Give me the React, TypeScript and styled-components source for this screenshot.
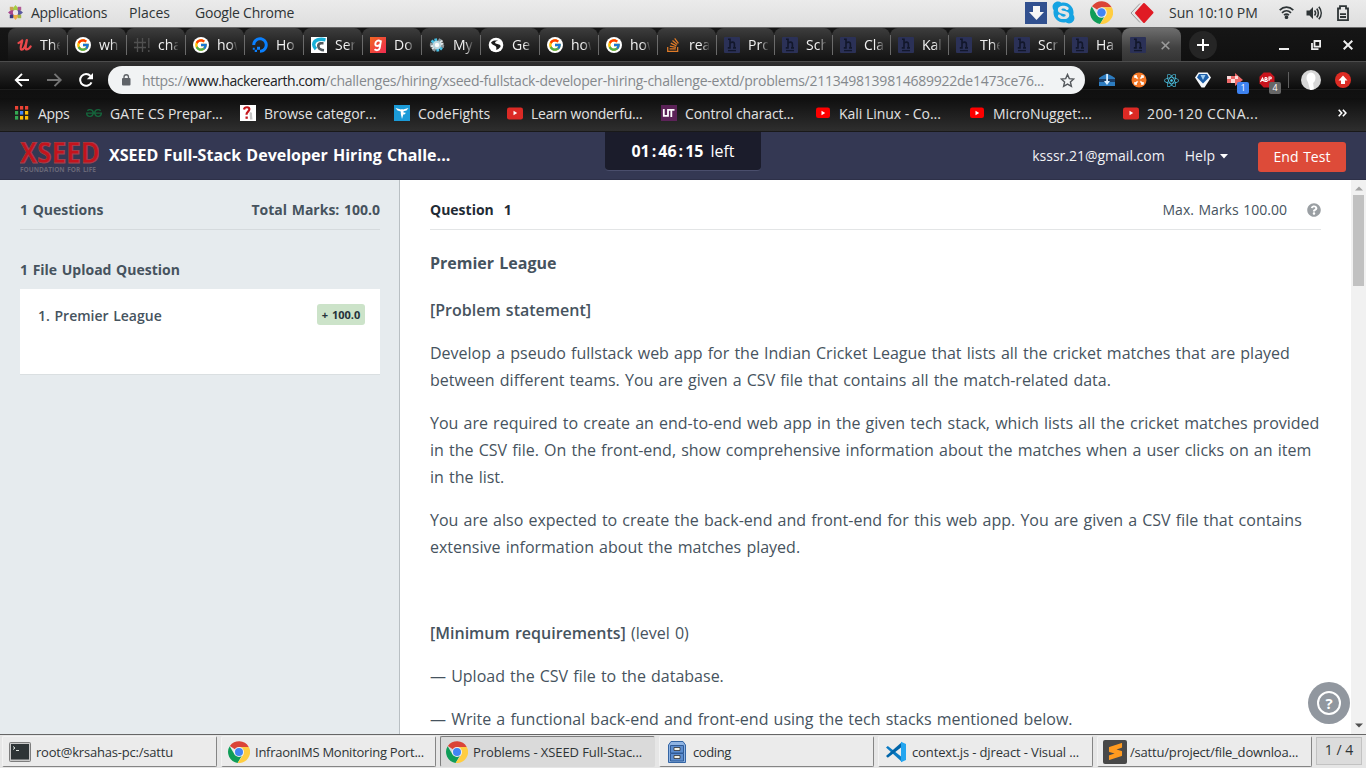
import React from 'react';
import styled, { createGlobalStyle, css } from 'styled-components';
import { FcGoogle } from 'react-icons/fc';
import { FaDigitalOcean, FaStackOverflow, FaReact, FaSkype, FaQuestionCircle } from 'react-icons/fa';
import { SiGeeksforgeeks, SiSublimetext } from 'react-icons/si';

const GlobalStyle = createGlobalStyle`
  *, *::before, *::after { box-sizing: border-box; }
  body { margin: 0; overflow: hidden; background: #fff; }
  p { margin: 0; }
  svg { display: block; flex: none; }
`;

const Screen = styled.div`
  width: 1366px;
  height: 768px;
  display: flex;
  flex-direction: column;
  overflow: hidden;
  font-family: 'Open Sans', 'Noto Sans', sans-serif;
`;

const Label = styled.span<{ $ls?: number }>`
  white-space: nowrap;
  letter-spacing: ${(p) => p.$ls ?? 0}px;
`;

/* ---------- desktop panel ---------- */

const DesktopBar = styled.header`
  height: 28px;
  flex: none;
  display: flex;
  align-items: center;
  padding: 0 17px 2px 8px;
  background: linear-gradient(#ebebeb, #dedede);
  border-bottom: 1px solid #6b6b6b;
  color: #2e3436;
  font-size: 14px;
`;

const DesktopMenu = styled.nav`
  display: flex;
  align-items: center;
  margin-left: 8px;
  flex: 1;
`;

const MenuName = styled(Label)<{ $w: number }>`
  width: ${(p) => p.$w}px;
`;

const Tray = styled.div`
  display: flex;
  align-items: center;
  height: 25px;
`;

const TrayIcon = styled.span<{ $gap: number }>`
  display: flex;
  margin-right: ${(p) => p.$gap}px;
`;

const SkypeBadge = styled.span`
  display: flex;
  margin-right: 14px;
  color: #15a3e2;
`;

/* ---------- browser tabs ---------- */

const TabStrip = styled.div`
  height: 33px;
  flex: none;
  display: flex;
  padding-left: 8px;
  background: linear-gradient(#161616, #101010);
`;

const Tab = styled.div<{ $w: number; $first?: boolean }>`
  width: ${(p) => p.$w}px;
  height: 33px;
  flex: none;
  display: flex;
  align-items: center;
  gap: 8px;
  padding: 1px 0 0 ${(p) => (p.$first ? 9 : 8)}px;
  border-radius: 8px 8px 0 0;
  background: linear-gradient(#3d3d3d, #262626 45%, #121212);
  color: #f1f1f1;
  font-size: 14px;
`;

const TabDivider = styled.i`
  width: 1px;
  height: 20px;
  margin: 7px -1px 0 0;
  flex: none;
  z-index: 1;
  background: #6a6a6a;
`;

const TabTitle = styled.span`
  width: 20px;
  margin-top: -1px;
  overflow: hidden;
  white-space: nowrap;
  -webkit-mask-image: linear-gradient(90deg, #000 60%, rgba(0, 0, 0, 0.1));
  mask-image: linear-gradient(90deg, #000 60%, rgba(0, 0, 0, 0.1));
`;

const ActiveTab = styled.div`
  width: 59px;
  height: 33px;
  flex: none;
  display: flex;
  align-items: center;
  gap: 15px;
  padding: 1px 0 0 8px;
  border-radius: 8px 8px 0 0;
  background: linear-gradient(#6e6e6e, #414141 60%, #343434);
`;

const NewTab = styled.button`
  width: 28px;
  height: 28px;
  margin: 3px 0 0 8px;
  padding: 0;
  border: 0;
  border-radius: 50%;
  display: grid;
  place-items: center;
  background: #252525;
`;

const WindowButtons = styled.div`
  margin-left: auto;
  padding: 1px 13px 0 0;
  display: flex;
  align-items: center;
  gap: 22px;
`;

const HackerEarthTile = styled.span`
  width: 16px;
  height: 16px;
  flex: none;
  display: grid;
  place-items: center;
  border-radius: 1px;
  background: #2b3157;
`;

/* ---------- toolbar ---------- */

const Toolbar = styled.div`
  height: 37px;
  flex: none;
  display: flex;
  align-items: center;
  padding: 0 14px;
  border-top: 1px solid #4c4c4c;
  background: linear-gradient(#303030, #0c0c0c 27px, #2b2b2b 27px, #101010 28px, #111);
`;

const NavIcon = styled.span<{ $gap: number }>`
  display: flex;
  margin-right: ${(p) => p.$gap}px;
`;

const Omnibox = styled.div`
  width: 977px;
  height: 28px;
  flex: none;
  display: flex;
  align-items: center;
  padding: 0 10px 0 12px;
  border-radius: 14px;
  background: #f1f3f4;
  font-size: 14px;
  color: #84888c;
`;

const Url = styled.div`
  flex: 1;
  display: flex;
  margin-left: 10px;
`;

const Host = styled(Label)`
  color: #202124;
`;

const Extensions = styled.div`
  display: flex;
  align-items: center;
  gap: 16px;
  margin-left: 14px;
`;

const Extension = styled.span`
  position: relative;
  width: 16px;
  height: 16px;
  display: grid;
  place-items: center;
`;

const ExtensionCount = styled.b<{ $color: string }>`
  position: absolute;
  left: 10px;
  top: 10px;
  width: 12px;
  height: 12px;
  border-radius: 2px;
  background: ${(p) => p.$color};
  color: #fff;
  font-size: 9px;
  font-weight: 400;
  line-height: 12px;
  text-align: center;
`;

const ToolbarDivider = styled.i`
  width: 1px;
  height: 16px;
  margin: 0 12px 0 13px;
  background: #5f5f5f;
`;

const Round = styled.span<{ $size: number; $bg: string }>`
  width: ${(p) => p.$size}px;
  height: ${(p) => p.$size}px;
  border-radius: 50%;
  display: grid;
  place-items: center;
  overflow: hidden;
  background: ${(p) => p.$bg};
`;

const BookmarksBar = styled.div`
  height: 34px;
  flex: none;
  display: flex;
  align-items: center;
  padding: 0 19px 3px 14px;
  background: linear-gradient(#0f0f0f, #2e2e2e);
  border-bottom: 1px solid #191919;
  color: #e2e2e2;
  font-size: 14px;
`;

const Bookmark = styled.a<{ $w: number }>`
  width: ${(p) => p.$w}px;
  flex: none;
  display: flex;
  align-items: center;
  gap: 8px;
`;

const Overflow = styled.span`
  margin-left: auto;
`;

/* ---------- test page ---------- */

const PageHeader = styled.header`
  height: 48px;
  flex: none;
  display: flex;
  align-items: flex-start;
  padding: 0 20px;
  background: #343853;
  box-shadow: inset 0 -1px #2d3048;
  word-spacing: 1px;
  color: #fff;
`;

const Logo = styled.div`
  width: 79px;
  margin-top: 10px;
  display: flex;
`;

const TestTitle = styled.h1`
  margin: 0 0 0 10px;
  width: 496px;
  font-size: 16px;
  font-weight: 700;
  line-height: 47px;
  white-space: nowrap;
`;

const Timer = styled.div`
  width: 156px;
  height: 39px;
  border-bottom: 1px solid #4a4e6c;
  border-radius: 0 0 4px 4px;
  background: #1b1c2b;
  font-size: 16px;
  line-height: 38px;
  text-align: center;
  white-space: nowrap;
`;

const Colon = styled.b`
  margin: 0 2px;
`;

const LeftWord = styled.span`
  margin-left: 7px;
`;

const Account = styled.div`
  margin-left: auto;
  display: flex;
  font-size: 14px;
  line-height: 48px;
  color: #f2f2f5;
`;

const HelpMenu = styled.span`
  display: flex;
  align-items: center;
  height: 48px;
  gap: 5px;
  margin: 0 30px 0 20px;
`;

const EndTest = styled.button`
  width: 88px;
  height: 30px;
  margin-top: 10px;
  padding: 0;
  border: 0;
  border-radius: 3px;
  background: #dd4b39;
  color: #fff;
  font: 14px/28px 'Open Sans', sans-serif;
  word-spacing: 1px;
`;

const PageBody = styled.main`
  flex: 1;
  min-height: 0;
  display: flex;
  word-spacing: 1px;
  color: #46535e;
`;

const Sidebar = styled.aside`
  width: 400px;
  flex: none;
  padding: 10px 19px 0 20px;
  border-right: 1px solid #b9bfc3;
  background: #e6ebee;
  font-size: 14px;
  font-weight: 700;
`;

const headRow = css`
  display: flex;
  justify-content: space-between;
  height: 40px;
  line-height: 39px;
  font-size: 14px;
`;

const SidebarHead = styled.div`
  ${headRow}
  border-bottom: 1px solid #d5dadd;
`;

const SectionTitle = styled.h2`
  margin: 30px 0 0;
  height: 29px;
  font-size: 14px;
  line-height: 20px;
`;

const QuestionCard = styled.div`
  height: 86px;
  display: flex;
  justify-content: space-between;
  padding: 15px 15px 0 18px;
  background: #fff;
  border-bottom: 1px solid #dadfe1;
  font-weight: 600;
  line-height: 24px;
`;

const Score = styled.span`
  width: 48px;
  height: 21px;
  border-radius: 3px;
  background: #cce3c9;
  color: #25323b;
  font-size: 11px;
  font-weight: 700;
  line-height: 21px;
  text-align: center;
`;

const Content = styled.section`
  width: 951px;
  height: 554px;
  overflow: hidden;
  padding: 10px 30px 0;
  background: #fff;
`;

const QuestionHead = styled.div`
  ${headRow}
  border-bottom: 1px solid #e3e5e6;
`;

const QuestionNumber = styled.b`
  color: #1f2b35;
`;

const Gap = styled.span`
  margin-left: 10px;
`;

const MaxMarks = styled.span`
  display: flex;
  align-items: center;
  gap: 20px;
`;

const HelpIcon = styled(FaQuestionCircle)`
  color: #9a9fa3;
`;

const ProblemTitle = styled.h2`
  margin: 20px 0;
  font-size: 16px;
  font-weight: 700;
  line-height: 27px;
`;

const Para = styled.p`
  min-height: 27px;
  margin-bottom: 16px;
  font-size: 16px;
  line-height: 27px;
  white-space: nowrap;
`;

const Strong = styled.span`
  font-weight: 600;
`;

const ScrollTrack = styled.div`
  width: 15px;
  display: flex;
  flex-direction: column;
  align-items: center;
  padding: 6px 0 6px;
  background: #f1f1f1;
`;

const ScrollThumb = styled.div`
  width: 11px;
  height: 91px;
  margin: 4px 0 auto;
  background: #c1c1c1;
`;

const HelpBubble = styled.button`
  position: absolute;
  left: 1308px;
  top: 682px;
  width: 42px;
  height: 42px;
  padding: 0;
  border: 0;
  border-radius: 50%;
  display: grid;
  place-items: center;
  background: #91979f;
`;

const BubbleRing = styled.span`
  width: 24px;
  height: 24px;
  border: 2px solid #fff;
  border-radius: 50%;
  color: #fff;
  font: 700 15px/20px 'Open Sans', sans-serif;
  text-align: center;
`;

/* ---------- window list ---------- */

const WindowList = styled.footer`
  height: 34px;
  flex: none;
  display: flex;
  align-items: flex-start;
  gap: 4px;
  padding: 1px 4px 0 2px;
  border-top: 1px solid #666;
  background: #e6e6e6;
  color: #2e3436;
  font-size: 13px;
`;

const WindowButton = styled.div<{ $active?: boolean }>`
  width: 215px;
  height: 31px;
  flex: none;
  display: flex;
  align-items: center;
  gap: 5px;
  padding: 0 0 0 ${(p) => (p.$active ? 5 : 6)}px;
  border-radius: 2px;
  ${(p) =>
    p.$active
      ? css`
          background: #dadada;
          border: 1px solid;
          border-color: #7d7d7d #dadada #dadada #7d7d7d;
        `
      : css`
          background: #ebebeb;
          border: 1px solid;
          border-color: #f3f3f3 #858585 #858585 #f3f3f3;
        `}
`;

const Workspace = styled.div`
  width: 47px;
  height: 28px;
  margin-top: 1px;
  border: 1px solid #c2c2c2;
  background: #dcdcdc;
  font-size: 14px;
  line-height: 24px;
  text-align: center;
`;

/* ---------- drawings ---------- */

const HackerEarthIcon = () => (
  <HackerEarthTile>
    <svg width="16" height="16" viewBox="0 0 16 16" fill="none" stroke="#12172b" strokeWidth="1.6">
      <path d="M4 2.3h2v8.400M3.800 10.900h3M6 6.300c1-1.600 4.400-1.800 4.400.9v3.500M9 10.900h3" />
      <path d="M4 13.600h8" strokeWidth="1.3" />
    </svg>
  </HackerEarthTile>
);

const GoogleIcon = () => (
  <Round $size={16} $bg="#fff">
    <FcGoogle size={14} />
  </Round>
);

const UdemyIcon = () => (
  <svg width="15" height="14" viewBox="0 0 15 14" fill="none" stroke="#e9484b" strokeWidth="2.3" strokeLinecap="round" strokeLinejoin="round">
    <path d="M1.500 5C3 4.500 4.500 3.300 5.200 2.400 5 5.500 2.200 11 4.500 11.700c2.300.2 4.200-4.500 5.300-9.500C9.300 5.500 7.500 11.200 9.700 11.400c1.600 0 3-1.400 3.900-2.900" />
  </svg>
);

const HashBangIcon = () => (
  <svg width="16" height="16" viewBox="0 0 16 16" fill="none" stroke="#505050" strokeWidth="1.300">
    <path d="M3.500 1v14M8.500 1v14M0 5.500h12M0 10.500h12M14.800 1v10M14.800 13v2" />
  </svg>
);

const SwirlIcon = () => (
  <svg width="16" height="16" viewBox="0 0 16 16">
    <path fill="#fff" d="M0 0h16v16H0z" />
    <path d="M14.500 2.800C8.500 1.300 3 3 2.700 7.500c0 2.500 1.300 3.500 2.300 4.500" fill="none" stroke="#18b0d8" strokeWidth="3.400" />
    <path d="M12.500 6.300H9.500c-3.500 1.200-3 6.500 3.500 6.900" fill="none" stroke="#515a5f" strokeWidth="2.600" />
  </svg>
);

const GoibiboIcon = () => (
  <svg width="16" height="16" viewBox="0 0 16 16">
    <defs>
      <linearGradient id="warm" x2="1" y2="1"><stop stopColor="#f26722" /><stop offset="1" stopColor="#ee2a50" /></linearGradient>
    </defs>
    <path fill="url(#warm)" d="M0 0h16v16H0z" />
    <path d="M10.500 4.300C8 2.500 5.300 4.500 5.300 7c0 2.600 3.200 2.400 4.500.4M11 3.300 9.700 11c-.5 2.600-3.500 2.700-5.200 1.300" fill="none" stroke="#fff" strokeWidth="1.900" />
  </svg>
);

const BurstIcon = () => (
  <svg width="16" height="16" viewBox="0 0 16 16">
    <g stroke="#8d979b" strokeWidth="3"><path d="M11.500 2 4.500 14M1 7l14 2.500" /></g>
    <g stroke="#49bfe4" strokeWidth="2.800"><path d="M6.500 1.500 9 14.500M2.500 3.500 13 12.500" /></g>
    <g stroke="#dfe5e7" strokeWidth="1.800"><path d="M13.500 3.500 3 12M1.500 9.500l13-3" /></g>
    <circle cx="8" cy="8" r="4.200" fill="#bcd6de" />
    <circle cx="8" cy="8" r="2.200" fill="#fafafa" />
  </svg>
);

const GlobeIcon = () => (
  <svg width="16" height="16" viewBox="0 0 16 16">
    <circle cx="8" cy="8" r="7.300" fill="#fff" />
    <path d="M3 5.500c2-2.500 5-2 7-2-3 1-4 2.300-1.500 3.300 2.500.5 4.500 1 4 3.200-1.500 1-2.500 3.300-4.500 2.500.8-1.500.5-3-1.500-4C5 8 4 7.500 3 5.500z" fill="#1c1c1c" />
  </svg>
);

const tabs = [
  { title: 'The', icon: <UdemyIcon /> },
  { title: 'wh', icon: <GoogleIcon /> },
  { title: 'cha', icon: <HashBangIcon /> },
  { title: 'how', icon: <GoogleIcon /> },
  { title: 'Ho', icon: <FaDigitalOcean size={16} color="#0a80ff" /> },
  { title: 'Ser', icon: <SwirlIcon /> },
  { title: 'Do', icon: <GoibiboIcon /> },
  { title: 'My', icon: <BurstIcon /> },
  { title: 'Ge', icon: <GlobeIcon /> },
  { title: 'how', icon: <GoogleIcon /> },
  { title: 'how', icon: <GoogleIcon /> },
  { title: 'rea', icon: <FaStackOverflow size={16} color="#e07b28" /> },
  ...['Pro', 'Sch', 'Cla', 'Kal', 'The', 'Scr', 'Ha'].map((title) => ({ title, icon: <HackerEarthIcon /> })),
];

const AppsIcon = () => {
  const colors = ['#ea4335', '#ea4335', '#ea4335', '#34a853', '#4285f4', '#fbbc05', '#34a853', '#fbbc05', '#fbbc05'];
  return (
    <svg width="16" height="16" viewBox="0 0 16 16">
      {colors.map((c, i) => (
        <rect key={i} x={1 + (i % 3) * 5} y={1 + Math.floor(i / 3) * 5} width="3.200" height="3.600" fill={c} />
      ))}
    </svg>
  );
};

const QuestionFigureIcon = () => (
  <svg width="16" height="16" viewBox="0 0 16 16">
    <path fill="#fff" d="M0 0h16v16H0z" />
    <path d="M4 4.500C4.500 1.500 10 1.500 9.300 4.700c-.3 2-3 2-2.800 5" fill="none" stroke="#c4161c" strokeWidth="2.200" />
    <path d="M5.500 11.500h2.300v2.300H5.500z" fill="#c4161c" />
    <path d="M9.500 7.500c2-1 3 .5 2.500 2.500l.5 4.500H10z" fill="#c6c6c6" />
  </svg>
);

const CodeFightsIcon = () => (
  <svg width="16" height="16" viewBox="0 0 16 16">
    <path fill="#1b9bd8" d="M0 0h16v16H0z" />
    <path fill="#fff" d="M1.500 3 7 4.500 8 4l1 .5L14.500 3 12.500 5.500 9.500 6.200v1.300l2.200.2-.7 1.500-1.700.3L8 14 6.800 9V6.500L3.500 5.500z" />
  </svg>
);

const PlayIcon = ({ soft }: { soft?: boolean }) => (
  <svg width="16" height="16" viewBox="0 0 16 16">
    <rect x={soft ? 0 : 1} y="2.500" width={soft ? 16 : 14} height={soft ? 12 : 10.500} rx="2.200" fill={soft ? '#dc2a25' : '#fe0000'} />
    <path d="M6.500 5.800 10.200 8l-3.700 2.200z" fill="#fff" />
  </svg>
);

const UtIcon = () => (
  <svg width="16" height="16" viewBox="0 0 16 16">
    <path fill="#5c2358" d="M0 0h16v16H0z" />
    <path d="M2.800 4v6.800H7V4M7 4.900h6.500M10.300 5v7" fill="none" stroke="#fff" strokeWidth="1.800" />
  </svg>
);

const bookmarks = [
  { text: 'Apps', w: 72, ls: -0.3, icon: <AppsIcon /> },
  { text: 'GATE CS Prepar...', w: 154, ls: -0.05, icon: <SiGeeksforgeeks size={16} color="#15653c" /> },
  { text: 'Browse categor...', w: 154, ls: 0, icon: <QuestionFigureIcon /> },
  { text: 'CodeFights', w: 113, ls: 0, icon: <CodeFightsIcon /> },
  { text: 'Learn wonderfu...', w: 154, ls: -0.22, icon: <PlayIcon soft /> },
  { text: 'Control charact...', w: 154, ls: -0.14, icon: <UtIcon /> },
  { text: 'Kali Linux - Co...', w: 154, ls: -0.03, icon: <PlayIcon /> },
  { text: 'MicroNugget:...', w: 154, ls: 0, icon: <PlayIcon /> },
  { text: '200-120 CCNA...', w: 154, ls: 0.48, icon: <PlayIcon soft /> },
];

const ChromeIcon = ({ size }: { size: number }) => (
  <svg width={size} height={size} viewBox="0 0 24 24">
    <path fill="#db4437" d="M12 12 2.040 5.500A12 12 0 0 1 22.600 6.500H12z" />
    <path fill="#0f9d58" d="M12 12 7.200 14.750 1.800 5.700A12 12 0 0 0 10.500 23.900l5.200-8.800z" />
    <path fill="#ffcd40" d="M12 6.500h10.700A12 12 0 0 1 10.500 23.900l6.300-9.200z" />
    <circle cx="12" cy="12" r="5.500" fill="#f1f1f1" />
    <circle cx="12" cy="12" r="4.400" fill="#4285f4" />
  </svg>
);

const TerminalIcon = () => (
  <svg width="22" height="20" viewBox="0 0 22 20">
    <rect x=".5" y=".5" width="21" height="19" rx="1" fill="#c9c9c9" stroke="#7d7d7d" />
    <rect x="2" y="2" width="18" height="15.500" fill="#2e3436" />
    <path d="M4 4.500 6 6 4 7.500M7 8.500h3" fill="none" stroke="#dfe5e0" />
  </svg>
);

const CabinetIcon = () => (
  <svg width="22" height="22" viewBox="0 0 22 22">
    <path d="M5 .5h12l2.500 3.500v17.500h-17V4z" fill="#8fb4e3" stroke="#3465a4" />
    <path d="M4.500 4.500h13v7.500h-13zM4.500 12.500h13V20h-13z" fill="#5c8dcf" stroke="#2f5a96" />
    <path d="M8 6.500h6v3H8zM8 14.500h6v3H8z" fill="#f2f2e8" stroke="#333" strokeWidth=".8" />
  </svg>
);

const CodeIcon = () => (
  <svg width="22" height="22" viewBox="0 0 22 22">
    <path d="M1 6.500 2.800 5 17 16.200V21z" fill="#0a7bc4" />
    <path d="M1 15 2.800 16.700 17 5.800V1z" fill="#0065a9" />
    <path d="M16 .8 21 3v16l-5 2.300z" fill="#23a5f0" />
  </svg>
);

const SublimeTile = styled.span`
  width: 24px;
  height: 24px;
  margin-right: -2px;
  margin-left: -1px;
  display: grid;
  place-items: center;
  border-radius: 2px;
  background: #484848;
  color: #ff9a1f;
`;

const windows = [
  { text: 'root@krsahas-pc:/sattu', ls: -0.2, icon: <TerminalIcon /> },
  { text: 'InfraonIMS Monitoring Port...', ls: -0.25, icon: <ChromeIcon size={22} /> },
  { text: 'Problems - XSEED Full-Stac...', ls: -0.08, icon: <ChromeIcon size={22} />, active: true },
  { text: 'coding', ls: -0.39, icon: <CabinetIcon /> },
  { text: 'context.js - djreact - Visual ...', ls: -0.13, icon: <CodeIcon /> },
  { text: '/sattu/project/file_downloa...', ls: -0.19, icon: <SublimeTile><SiSublimetext size={17} /></SublimeTile> },
];

const DistroIcon = () => (
  <svg width="15" height="15" viewBox="0 0 15 15">
    <path d="M5 3 7.500 0 10 3v2.500H5z" fill="#a5cf45" />
    <path d="M12 5 15 7.500 12 10H9.500V5z" fill="#5a59a0" />
    <path d="M10 12 7.500 15 5 12V9.500h5z" fill="#efb04a" />
    <path d="M3 10 0 7.500 3 5h2.500v5z" fill="#a8488f" />
    <path d="M1.800 1.800h3.500v3.500H1.800z" fill="#c9a34f" />
    <path d="M9.700 1.800h3.500v3.500H9.700z" fill="#b05a94" />
    <path d="M1.800 9.700h3.500v3.500H1.800z" fill="#3b3a80" />
    <path d="M9.700 9.700h3.500v3.500H9.700z" fill="#a3b84a" />
    <circle cx="7.500" cy="7.500" r="2.600" fill="#ece9ec" />
  </svg>
);

const DownloadIcon = () => (
  <svg width="22" height="22" viewBox="0 0 22 22">
    <path fill="#31508f" d="M0 0h22v22H0z" />
    <path fill="#f7f7f7" d="M8 4h7v6h4l-7.500 8L4 10h4z" />
  </svg>
);

const DiamondIcon = () => (
  <svg width="24" height="22" viewBox="0 0 24 22">
    <path d="M10 1.500 1 11l9 9.500" fill="none" stroke="#999" />
    <path d="M14 2 22.500 10.500 14 20 6 11z" fill="#e01b24" stroke="#e01b24" strokeLinejoin="round" strokeWidth="2" />
  </svg>
);

const WifiIcon = () => (
  <svg width="15" height="13" viewBox="0 0 15 13" fill="none" stroke="#2e3436" strokeWidth="1.700">
    <path d="M.7 4.200c4-4 9.600-4 13.600 0M3 6.800c2.700-2.600 6.300-2.600 9 0M5 9.200c1.600-1.400 3.400-1.400 5 0" />
    <circle cx="7.500" cy="11.200" r="1" fill="#2e3436" />
  </svg>
);

const VolumeIcon = () => (
  <svg width="16" height="14" viewBox="0 0 16 14" fill="none" stroke="#2e3436" strokeWidth="1.600">
    <path d="M.5 4.500h3L7 1v12L3.500 9.500h-3z" fill="#2e3436" stroke="none" />
    <path d="M8.500 4.500c1.200 1.400 1.200 3.600 0 5M10.700 2.600c2.200 2.500 2.200 6.300 0 8.800M12.800.7c3.200 3.800 3.200 8.800 0 12.600" />
  </svg>
);

const BatteryIcon = () => (
  <svg width="12" height="16" viewBox="0 0 12 16" fill="none" stroke="#2e3436" strokeWidth="1.800">
    <path d="M1 3.500h2V1.200h6v2.300h2v11.600H1zM3 9.200h6M3 12h6" />
  </svg>
);

const App = () => (
  <Screen>
    <GlobalStyle />
    <DesktopBar>
      <DistroIcon />
      <DesktopMenu>
        <MenuName $w={98} $ls={-0.31}>Applications</MenuName>
        <MenuName $w={66}>Places</MenuName>
        <MenuName $w={110} $ls={-0.23}>Google Chrome</MenuName>
      </DesktopMenu>
      <Tray>
        <TrayIcon $gap={4}><DownloadIcon /></TrayIcon>
        <SkypeBadge><FaSkype size={25} /></SkypeBadge>
        <TrayIcon $gap={17}><ChromeIcon size={23} /></TrayIcon>
        <TrayIcon $gap={15}><DiamondIcon /></TrayIcon>
        <MenuName $w={110}>Sun 10:10 PM</MenuName>
        <TrayIcon $gap={12}><WifiIcon /></TrayIcon>
        <TrayIcon $gap={15}><VolumeIcon /></TrayIcon>
        <BatteryIcon />
      </Tray>
    </DesktopBar>

    <TabStrip>
      {tabs.map((tab, i) => (
        <React.Fragment key={i}>
          {i > 0 && <TabDivider />}
          <Tab $w={i < 12 ? 59 : 58} $first={i === 0}>
            {tab.icon}
            <TabTitle>{tab.title}</TabTitle>
          </Tab>
        </React.Fragment>
      ))}
      <ActiveTab>
        <HackerEarthIcon />
        <svg width="9" height="9" viewBox="0 0 9 9" stroke="#9b9b9b" strokeWidth="1.600"><path d="m.7.7 7.600 7.600M8.300.7.700 8.300" /></svg>
      </ActiveTab>
      <NewTab>
        <svg width="12" height="12" viewBox="0 0 12 12" stroke="#fff" strokeWidth="2"><path d="M6 0v12M0 6h12" /></svg>
      </NewTab>
      <WindowButtons>
        <svg width="10" height="10" viewBox="0 0 10 10" fill="#eee"><path d="M0 8h10v2H0z" /></svg>
        <svg width="10" height="10" viewBox="0 0 10 10" fill="none" stroke="#eee" strokeWidth="1.800"><path d="M3.500 1h5.600v5.600H3.500zM1 3v6.100h6.500" /></svg>
        <svg width="10" height="10" viewBox="0 0 10 10" stroke="#eee" strokeWidth="2"><path d="m.7.7 8.600 8.600M9.300.7.700 9.300" /></svg>
      </WindowButtons>
    </TabStrip>

    <Toolbar>
      <NavIcon $gap={17}>
        <svg width="16" height="14" viewBox="0 0 16 14" fill="none" stroke="#fff" strokeWidth="1.900"><path d="M15 7H2M8 .8 1.800 7 8 13.200" /></svg>
      </NavIcon>
      <NavIcon $gap={16}>
        <svg width="16" height="14" viewBox="0 0 16 14" fill="none" stroke="#747474" strokeWidth="1.900"><path d="M0 7h13.500M7.500.8 13.700 7l-6.200 6.200" /></svg>
      </NavIcon>
      <NavIcon $gap={14}>
        <svg width="15" height="14" viewBox="0 0 15 14" fill="none" stroke="#fff" strokeWidth="2"><path d="M12.500 9.300A5.900 5.900 0 1 1 11.500 3" /><path d="M14 0v6.200H7.800z" fill="#fff" stroke="none" /></svg>
      </NavIcon>
      <Omnibox>
        <svg width="12" height="12" viewBox="0 0 12 12"><rect x="2" y="4" width="8.500" height="7.500" rx="1" fill="#5f6368" /><path d="M4 4.500V3a2.200 2.200 0 0 1 4.500 0v1.500" fill="none" stroke="#5f6368" strokeWidth="1.300" /></svg>
        <Url>
          <Label $ls={-0.34}>https://</Label>
          <Host $ls={-0.47}>www.hackerearth.com</Host>
          <Label $ls={-0.24}>/challenges/hiring/xseed-fullstack-developer-hiring-challenge-extd/problems/2113498139814689922de1473ce76...</Label>
        </Url>
        <svg width="15" height="15" viewBox="0 0 15 15" fill="none" stroke="#54585c" strokeWidth="1.400"><path d="m7.500 1.500 1.800 4.100 4.500.4-3.400 3 1 4.400-3.900-2.300-3.900 2.300 1-4.400-3.400-3 4.500-.4z" /></svg>
      </Omnibox>
      <Extensions>
        <Extension>
          <svg width="16" height="14" viewBox="0 0 16 14"><path d="M0 5 3 3l5-2.500L13 3l3 2v8H0z" fill="#2d7cc0" /><path d="M0 6h16v3H0z" fill="#1b3d66" /><path d="M7.200 1h1.800v7h2L8 12 5 8h2.200z" fill="#d9efff" /></svg>
        </Extension>
        <Extension>
          <svg width="16" height="16" viewBox="0 0 16 16"><circle cx="8" cy="8" r="7.500" fill="#f37726" /><path d="m4 4 8 8M12 4l-8 8" stroke="#fff" strokeWidth="1.600" /><circle cx="8" cy="8" r="2" fill="#f37726" /><path d="M4 6V4h2M10 4h2v2M4 10v2h2M12 10v2h-2" fill="none" stroke="#fff" strokeWidth="1.500" /></svg>
        </Extension>
        <Extension><FaReact size={15} color="#4dc8ea" /></Extension>
        <Extension>
          <svg width="16" height="16" viewBox="0 0 16 16"><path d="M3.500.5h9L16 5.500 9.500 15.500h-3L0 5.500z" fill="#f5f8fb" /><path d="M4 2h8l2 3.500-6 6-6-6z" fill="#1c5ea8" /><path d="M5.500 3h5L8 8z" fill="#9fcdf2" /></svg>
        </Extension>
        <Extension>
          <svg width="16" height="14" viewBox="0 0 16 14"><path d="M0 3h8V0l8 7-8 6v-3H0z" fill="#ef6a6a" /><path d="M0 3h4v3H0zM4 6h4v4H4zM8 3h3v3H8z" fill="#fbdada" /></svg>
          <ExtensionCount $color="#3d82f0">1</ExtensionCount>
        </Extension>
        <Extension>
          <svg width="16" height="16" viewBox="0 0 16 16"><path d="M4.700.5h6.600L15.500 4.700v6.600l-4.200 4.200H4.700L.5 11.300V4.700z" fill="#c9141d" /><path d="m1.500 10 2-4 1.500 3.500M2.500 8.500h2M6 5.500v4c3 .5 3-2 .5-2 2.300 0 2-2.300-.5-2M10 9V5c3-.5 3 2 .3 2.200" fill="none" stroke="#fff" strokeWidth="1.100" /></svg>
          <ExtensionCount $color="#666">4</ExtensionCount>
        </Extension>
      </Extensions>
      <ToolbarDivider />
      <Round $size={20} $bg="#d7d7d7">
        <svg width="20" height="20" viewBox="0 0 20 20" fill="#fff"><ellipse cx="10" cy="8" rx="4.500" ry="5.500" /><path d="M7 12h5l1 8H9z" /></svg>
      </Round>
      <NavIcon $gap={14} />
      <Round $size={16} $bg="#dc2b23">
        <svg width="10" height="10" viewBox="0 0 10 10" fill="#fff"><path d="m5 .5 4.500 5H7V9H3V5.500H.5z" /></svg>
      </Round>
    </Toolbar>

    <BookmarksBar>
      {bookmarks.map((b) => (
        <Bookmark key={b.text} $w={b.w}>
          {b.icon}
          <Label $ls={b.ls}>{b.text}</Label>
        </Bookmark>
      ))}
      <Overflow>
        <svg width="9" height="8" viewBox="0 0 9 8" fill="none" stroke="#fff" strokeWidth="1.600"><path d="m.7.700 3 3.300-3 3.300M4.900.700l3 3.300-3 3.300" /></svg>
      </Overflow>
    </BookmarksBar>

    <PageHeader>
      <Logo>
        <svg width="79" height="32" viewBox="0 0 79 32">
          <g fontFamily="Open Sans, sans-serif" fontWeight="700">
            <text x="0" y="21.300" fontSize="28" textLength="80" lengthAdjust="spacingAndGlyphs" fill="#c4131d" stroke="#a0454f" strokeWidth=".8">XSEED</text>
            <text x="0" y="29.700" fontSize="7" textLength="76" lengthAdjust="spacingAndGlyphs" fill="#686777">FOUNDATION FOR LIFE</text>
          </g>
        </svg>
      </Logo>
      <TestTitle>XSEED Full-Stack Developer Hiring Challe...</TestTitle>
      <Timer>
        <b>01</b><Colon>:</Colon><b>46</b><Colon>:</Colon><b>15</b><LeftWord>left</LeftWord>
      </Timer>
      <Account>
        <span>ksssr.21@gmail.com</span>
        <HelpMenu>
          Help
          <svg width="8" height="5" viewBox="0 0 8 5" fill="#fff"><path d="M0 0h8L4 4.500z" /></svg>
        </HelpMenu>
        <EndTest>End Test</EndTest>
      </Account>
    </PageHeader>

    <PageBody>
      <Sidebar>
        <SidebarHead>
          <span>1 Questions</span>
          <span>Total Marks: 100.0</span>
        </SidebarHead>
        <SectionTitle>1 File Upload Question</SectionTitle>
        <QuestionCard>
          <span>1. Premier League</span>
          <Score>+ 100.0</Score>
        </QuestionCard>
      </Sidebar>
      <Content>
        <QuestionHead>
          <QuestionNumber>Question<Gap>1</Gap></QuestionNumber>
          <MaxMarks>
            Max. Marks 100.00
            <HelpIcon size={14} />
          </MaxMarks>
        </QuestionHead>
        <ProblemTitle>Premier League</ProblemTitle>
        <Para><Strong>[Problem statement]</Strong></Para>
        <Para>
          Develop a pseudo fullstack web app for the Indian Cricket League that lists all the cricket matches that are played<br />
          between different teams. You are given a CSV file that contains all the match-related data.
        </Para>
        <Para>
          You are required to create an end-to-end web app in the given tech stack, which lists all the cricket matches provided<br />
          in the CSV file. On the front-end, show comprehensive information about the matches when a user clicks on an item<br />
          in the list.
        </Para>
        <Para>
          You are also expected to create the back-end and front-end for this web app. You are given a CSV file that contains<br />
          extensive information about the matches played.
        </Para>
        <Para />
        <Para><Strong>[Minimum requirements]</Strong> (level 0)</Para>
        <Para>— Upload the CSV file to the database.</Para>
        <Para>— Write a functional back-end and front-end using the tech stacks mentioned below.</Para>
      </Content>
      <ScrollTrack>
        <svg width="8" height="5" viewBox="0 0 8 5" fill="#a3a3a3"><path d="M0 4.500h8L4 .5z" /></svg>
        <ScrollThumb />
        <svg width="8" height="5" viewBox="0 0 8 5" fill="#505050"><path d="M0 .5h8L4 4.500z" /></svg>
      </ScrollTrack>
    </PageBody>
    <HelpBubble><BubbleRing>?</BubbleRing></HelpBubble>

    <WindowList>
      {windows.map((w) => (
        <WindowButton key={w.text} $active={w.active}>
          {w.icon}
          <Label $ls={w.ls}>{w.text}</Label>
        </WindowButton>
      ))}
      <Workspace>1 / 4</Workspace>
    </WindowList>
  </Screen>
);

export default App;
